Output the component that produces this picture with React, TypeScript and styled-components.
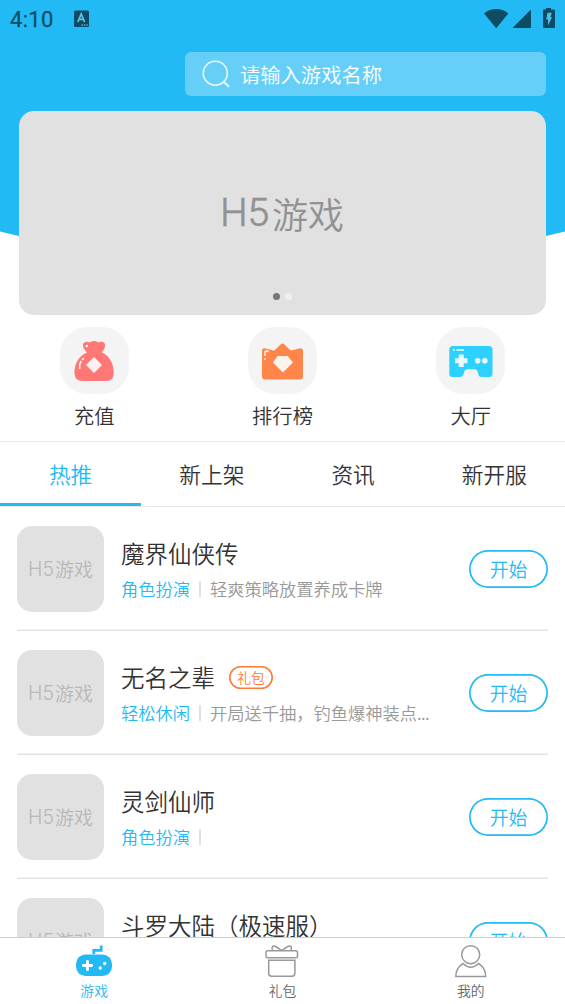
import React from "react";
import styled, { createGlobalStyle } from "styled-components";

const BLUE = "#22baf5";

const GlobalStyle = createGlobalStyle`
  * { box-sizing: border-box; }
  body {
    margin: 0;
    background: #fff;
    color: #333;
    font-family: "Noto Sans CJK SC", sans-serif;
    font-weight: 350;
    overflow: hidden;
  }
  svg { display: block; }
`;

const Screen = styled.div`
  width: 565px;
  height: 1004px;
  display: flex;
  flex-direction: column;
  overflow: hidden;
  background: #fff;
`;

const Hero = styled.header`
  flex: none;
  height: 315px;
  display: flex;
  flex-direction: column;
  padding: 0 19px;
  isolation: isolate;
  position: relative;
  &::before {
    content: "";
    position: absolute;
    inset: 0;
    z-index: -1;
    background: ${BLUE};
    clip-path: polygon(0 0, 100% 0, 100% 231.5px, 50% 299px, 0 231.5px);
  }
`;

const StatusBar = styled.div`
  height: 52px;
  margin: 0 -9px;
  display: flex;
  align-items: flex-start;
  justify-content: space-between;
  color: #0e4c64;
`;

const StatusGroup = styled.div`
  display: flex;
  align-items: flex-start;
`;

const Clock = styled.span`
  font: 400 22px/26px Roboto, sans-serif;
  letter-spacing: 0.3px;
  width: 64px;
  margin-top: 7px;
  -webkit-text-stroke: 0.25px currentColor;
`;

const SearchBox = styled.div`
  align-self: flex-end;
  width: 361px;
  height: 44px;
  padding-left: 17px;
  display: flex;
  align-items: center;
  gap: 9px;
  border-radius: 6px;
  background: #65cff8;
  color: #fff;
  font-size: 20.3px;
  line-height: 44px;
`;

const Banner = styled.div`
  height: 204px;
  margin-top: 15px;
  padding-bottom: 15px;
  border-radius: 15px;
  background: #e1e1e1;
  display: flex;
  flex-direction: column;
  align-items: center;
  justify-content: space-between;
`;

const BannerText = styled.div`
  margin-top: 76px;
  margin-right: 1px;
  display: flex;
  align-items: center;
  gap: 2px;
  font-size: 36px;
  line-height: 52px;
  color: #929292;
`;

const Latin = styled.span<{ $size: number; $stroke: number }>`
  font-family: Inter, sans-serif;
  font-weight: 300;
  font-size: ${(p) => p.$size}px;
  -webkit-text-stroke: ${(p) => p.$stroke}px currentColor;
`;

const Dots = styled.div`
  display: flex;
  gap: 5px;
`;

const Dot = styled.i<{ $active?: boolean }>`
  width: 7px;
  height: 7px;
  border-radius: 50%;
  background: ${(p) => (p.$active ? "#777" : "#f0f0f0")};
`;

const Shortcuts = styled.nav`
  flex: none;
  height: 127px;
  padding-top: 12px;
  display: grid;
  grid-template-columns: repeat(3, 1fr);
  border-bottom: 1px solid #e8e8e8;
`;

const Shortcut = styled.div`
  display: flex;
  flex-direction: column;
  align-items: center;
  font-size: 20.3px;
  line-height: 30px;
  gap: 6px;
`;

const ShortcutIcon = styled.div`
  width: 69px;
  height: 67px;
  border-radius: 27px;
  background: #f4f4f4;
`;

const Tabs = styled.nav`
  flex: none;
  height: 65px;
  display: grid;
  grid-template-columns: repeat(4, 1fr);
  border-bottom: 1px solid #e8e8e8;
`;

const Tab = styled.div<{ $active?: boolean }>`
  height: 64px;
  text-align: center;
  font-size: 21.7px;
  line-height: 64px;
  color: ${(p) => (p.$active ? BLUE : "#333")};
  box-shadow: inset 0 -3px 0 ${(p) => (p.$active ? BLUE : "transparent")};
`;

const List = styled.main`
  flex: 1;
  min-height: 0;
  overflow: hidden;
  padding: 0 17px;
`;

const Row = styled.article`
  height: 124px;
  padding-top: 19px;
  display: flex;
  align-items: flex-start;
  box-shadow: inset 0 -1.5px 0 #e3e3e3;
`;

const Thumb = styled.div`
  flex: none;
  width: 87px;
  height: 86px;
  border-radius: 15px;
  background: #e1e1e1;
  display: flex;
  align-items: center;
  justify-content: center;
  gap: 1px;
  font-size: 19px;
  line-height: 28px;
  color: #b8b8b8;
`;

const Info = styled.div`
  flex: 1;
  min-width: 0;
  margin-left: 17px;
  padding-top: 10px;
`;

const TitleLine = styled.div`
  display: flex;
  align-items: center;
  gap: 14px;
  font-size: 23.5px;
  line-height: 35px;
  white-space: nowrap;
`;

const GiftTag = styled.span`
  width: 44px;
  height: 23px;
  box-shadow: inset 0 0 0 1.6px #ff7a36;
  border-radius: 12px;
  color: #ff7a36;
  font-size: 13.8px;
  line-height: 22px;
  text-align: center;
`;

const Meta = styled.div`
  margin-top: 5px;
  display: flex;
  align-items: center;
  font-size: 17.25px;
  line-height: 26px;
  color: #999;
  white-space: nowrap;
`;

const Genre = styled.span`
  color: ${BLUE};
  margin-right: 9px;
`;

const Divider = styled.i`
  width: 2px;
  height: 16px;
  margin-right: 9px;
  background: #e1e1e1;
`;

const Ellipsis = styled.span`
  letter-spacing: -0.7px;
`;

const StartButton = styled.button`
  flex: none;
  width: 79px;
  height: 38px;
  margin-top: 24px;
  padding: 0;
  border: 0;
  box-shadow: inset 0 0 0 1.7px ${BLUE};
  border-radius: 19px;
  background: #fff;
  color: ${BLUE};
  font: 350 18.8px/38px "Noto Sans CJK SC", sans-serif;
`;

const BottomBar = styled.footer`
  flex: none;
  height: 67px;
  padding-top: 4px;
  display: grid;
  grid-template-columns: repeat(3, 1fr);
  border-top: 1px solid #cfcfc9;
  background: #fff;
`;

const BottomItem = styled.div<{ $active?: boolean }>`
  display: flex;
  flex-direction: column;
  align-items: center;
  gap: 1px;
  font-size: 13.8px;
  line-height: 20px;
  color: ${(p) => (p.$active ? BLUE : "#666")};
`;

const H5Mark = ({ latin, stroke }: { latin: number; stroke: number }) => (
  <>
    <Latin $size={latin} $stroke={stroke}>H5</Latin>
    <span>游戏</span>
  </>
);

const LanguageIcon = () => (
  <svg width="15" height="32" viewBox="0 0 15 32">
    <rect y="10.500" width="15" height="16.500" rx="1.500" fill="currentColor" />
    <path d="M3.800 22 7.200 14 10.600 22M5.100 19.400h4.200" fill="none" stroke="#5fbfe4" strokeWidth="1.800" />
    <path d="M7.500 25h1.300M10 25h1.300M12.500 25h1.200" stroke="#5fbfe4" strokeWidth="1.500" />
  </svg>
);

const StatusIcons = () => (
  <svg width="72" height="32" viewBox="483 0 72 32" fill="currentColor">
    <path d="M484 13.500C491 7.600 501.500 7.600 508.300 13.500L496.200 28.200Z" />
    <path d="M512.500 28 531 9.500V28Z" />
    <path d="M543 10.500q0-1 1-1h2V8h5v1.500h3q1 0 1 1V27q0 1-1 1h-10q-1 0-1-1Z" />
    <path d="m547.500 12.800 4.300 0-1.300 4.500h1.500L548 25.500v-6h-1.800Z" fill="#4fbde5" />
  </svg>
);

const SearchIcon = () => (
  <svg width="29" height="30" viewBox="0 0 29 30" fill="none" stroke="#e9f8ff" strokeWidth="1.600">
    <circle cx="13.300" cy="14.200" r="12" />
    <path d="m21.800 22.700 5.200 5.200" strokeWidth="2" />
  </svg>
);

const BagIcon = () => (
  <svg width="69" height="67" viewBox="0 0 69 67">
    <path
      fill="#ff7875"
      d="M27 25.500C24 22 22 19.500 23.500 16.500C25 14 28.500 14.500 30 15.500C31.500 13.500 36.500 13.500 38 15.500C40 14.500 43.500 14 44.700 16.500C46 20 43.500 23 42 25.500C50 29 54 37.500 53.700 46.500Q53.500 54 46.500 54H22Q15 54 14.500 46.500C14 37.500 18.500 29 27 25.500Z"
    />
    <path fill="#fff1f0" d="m34 30 8 8-8 8-8-8Z" />
    <path d="M19.800 41.300q-.5-4.500 1.100-6.800M22.600 32.300l.8-.7" stroke="#fff" strokeWidth="1.600" strokeLinecap="round" fill="none" />
    <circle cx="26.800" cy="19" r="1.200" fill="#fff" />
  </svg>
);

const CrownIcon = () => (
  <svg width="69" height="67" viewBox="0 0 69 67">
    <path
      fill="#ff854b"
      d="M14 24Q14 20.500 17.500 21.500L25 23.500Q26.500 23.800 28 22L32.500 17.500Q34.500 15.500 36.500 17.500L41 22Q42.500 23.800 44 23.300L51 21.500Q55 20.500 55 24.500V49.500Q55 52.500 52 52.500H17Q14 52.500 14 49.500Z"
    />
    <path fill="#fff4ed" d="M29.500 29h10.200l5.200 6.500-10 10-10-10Z" />
    <path d="M17 29v-3.500q0-2 2.500-1.500l1 1M17 31.300v1.500" stroke="#fff" strokeWidth="1.500" fill="none" />
  </svg>
);

const ConsoleIcon = () => (
  <svg width="69" height="67" viewBox="0 0 69 67">
    <path
      fill="#2dd1ff"
      d="M17 19H53Q56.500 19 56.500 22.500V46.500Q56.500 50 53 50H45.500Q42.800 50 42.300 47L41.600 44.600Q41 42.300 38.500 42.300H31.500Q29 42.300 28.300 44.600L27.600 47Q27 50 24 50H16.500Q13.300 50 13.300 46.500V22.500Q13.300 19 17 19Z"
    />
    <path d="M25.200 27.500v12.500M19 33.700h12.500" stroke="#eafaff" strokeWidth="5" />
    <circle cx="41.700" cy="33.700" r="2.800" fill="#eafaff" />
    <circle cx="48.800" cy="33.700" r="2.800" fill="#eafaff" />
    <path d="M17 23h2M20.500 23h7.500" stroke="#fff" strokeWidth="1.400" />
  </svg>
);

const GameNavIcon = () => (
  <svg width="38" height="37" viewBox="0 0 38 37">
    <rect x="1" y="12.500" width="36" height="21.500" rx="9.500" fill={BLUE} />
    <path d="M18.800 12V8.300h7.400V3.500" fill="none" stroke={BLUE} strokeWidth="2.800" />
    <path d="M12.500 19.300v8.400M8.300 23.500h8.400" stroke="#fff" strokeWidth="2.800" strokeLinecap="round" />
    <circle cx="25.200" cy="26" r="1.700" fill="#fff" />
    <circle cx="29.700" cy="21.500" r="1.700" fill="#fff" />
  </svg>
);

const GiftNavIcon = () => (
  <svg width="38" height="37" viewBox="0 0 38 37" fill="none" stroke="#999" strokeWidth="1.500">
    <rect x="3" y="8.700" width="31.500" height="7" rx="1.500" />
    <path d="M5.700 18.300h26.200v13q0 3-3 3h-20.200q-3 0-3-3Z" />
    <path d="M9.500 8.500C8.300 5.500 9.500 3.200 12 4.200Q15 5.500 18.700 8.500Q22.500 5.500 25.500 4.200C28 3.200 29.200 5.500 28 8.500" />
  </svg>
);

const UserNavIcon = () => (
  <svg width="38" height="37" viewBox="0 0 38 37" fill="none" stroke="#999" strokeWidth="1.500">
    <circle cx="18.700" cy="12.700" r="9" />
    <path d="M11 21.500C6.800 24 3.800 28.500 3.800 34.500H33.700C33.700 28.500 30.700 24 26.500 21.500Q18.700 29 11 21.500Z" />
  </svg>
);

const games = [
  { title: "魔界仙侠传", genre: "角色扮演", desc: "轻爽策略放置养成卡牌" },
  { title: "无名之辈", genre: "轻松休闲", desc: "开局送千抽，钓鱼爆神装点", clipped: true, gift: true },
  { title: "灵剑仙师", genre: "角色扮演", desc: "" },
  { title: "斗罗大陆（极速服）", genre: "角色扮演", desc: "" },
];

export default function App() {
  return (
    <Screen>
      <GlobalStyle />
      <Hero>
        <StatusBar>
          <StatusGroup>
            <Clock>4:10</Clock>
            <LanguageIcon />
          </StatusGroup>
          <StatusIcons />
        </StatusBar>
        <SearchBox>
          <SearchIcon />
          <span>请输入游戏名称</span>
        </SearchBox>
        <Banner>
          <BannerText>
            <H5Mark latin={37.5} stroke={0.5} />
          </BannerText>
          <Dots>
            <Dot $active />
            <Dot />
          </Dots>
        </Banner>
      </Hero>
      <Shortcuts>
        <Shortcut>
          <ShortcutIcon><BagIcon /></ShortcutIcon>
          充值
        </Shortcut>
        <Shortcut>
          <ShortcutIcon><CrownIcon /></ShortcutIcon>
          排行榜
        </Shortcut>
        <Shortcut>
          <ShortcutIcon><ConsoleIcon /></ShortcutIcon>
          大厅
        </Shortcut>
      </Shortcuts>
      <Tabs>
        {["热推", "新上架", "资讯", "新开服"].map((name, i) => (
          <Tab key={name} $active={i === 0}>{name}</Tab>
        ))}
      </Tabs>
      <List>
        {games.map((game) => (
          <Row key={game.title}>
            <Thumb><H5Mark latin={19.5} stroke={0} /></Thumb>
            <Info>
              <TitleLine>
                {game.title}
                {game.gift && <GiftTag>礼包</GiftTag>}
              </TitleLine>
              <Meta>
                <Genre>{game.genre}</Genre>
                <Divider />
                {game.desc}
                {game.clipped && <Ellipsis>...</Ellipsis>}
              </Meta>
            </Info>
            <StartButton>开始</StartButton>
          </Row>
        ))}
      </List>
      <BottomBar>
        <BottomItem $active><GameNavIcon />游戏</BottomItem>
        <BottomItem><GiftNavIcon />礼包</BottomItem>
        <BottomItem><UserNavIcon />我的</BottomItem>
      </BottomBar>
    </Screen>
  );
}
